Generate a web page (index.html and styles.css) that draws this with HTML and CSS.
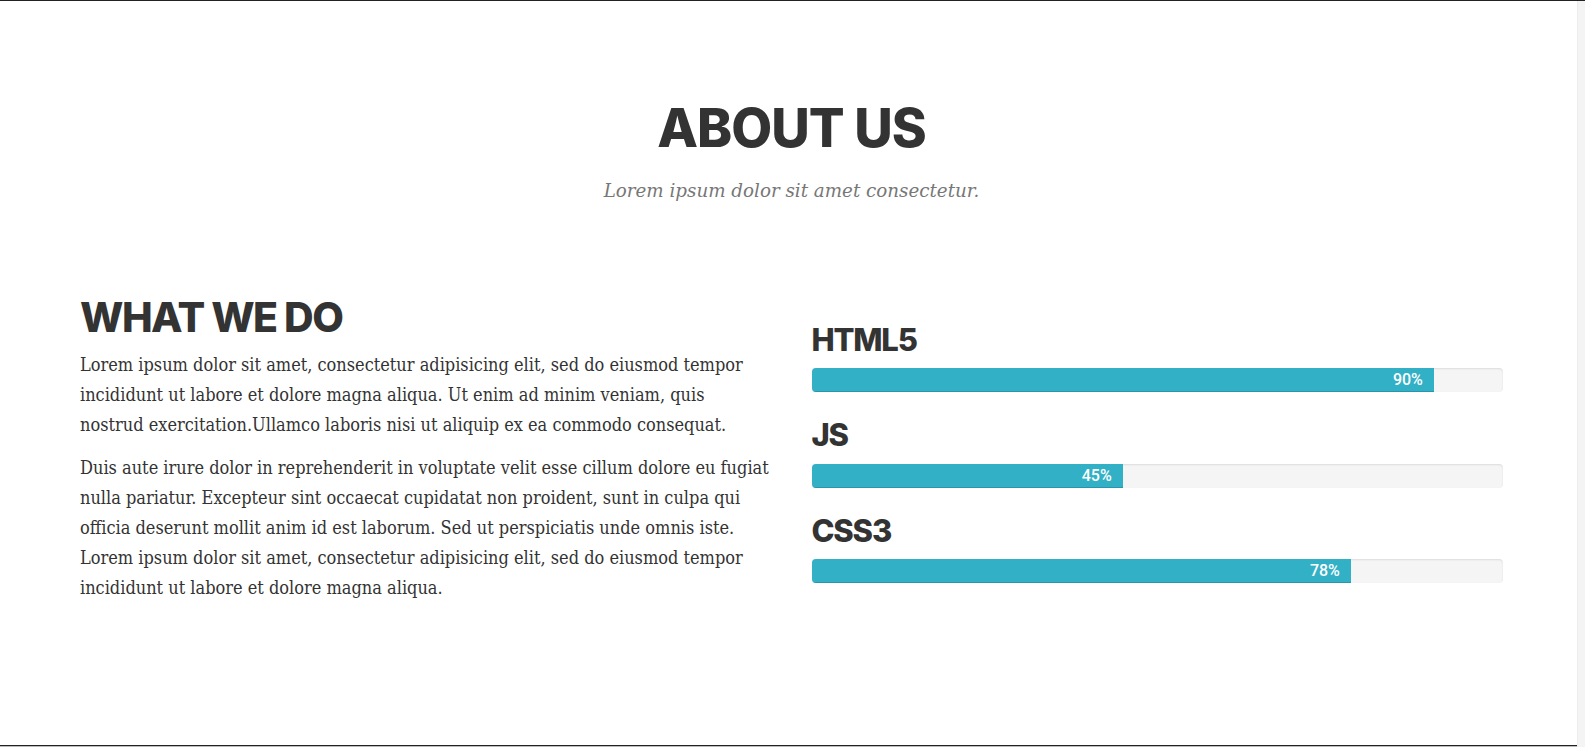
FILE: index.html
```html
<!DOCTYPE html>
<html lang="en">
<head>
<meta charset="utf-8">
<title>About Us</title>
<link rel="stylesheet" href="styles.css">
</head>
<body>
<section class="about">
  <div class="container">
    <header class="section-head">
      <h2 class="section-heading">ABOUT US</h2>
      <h3 class="section-subheading">Lorem ipsum dolor sit amet consectetur.</h3>
    </header>
    <div class="row">
      <div class="col-text">
        <h3 class="col-title">WHAT WE DO</h3>
        <p>Lorem ipsum dolor sit amet, consectetur adipisicing elit, sed do eiusmod tempor incididunt ut labore et dolore magna aliqua. Ut enim ad minim veniam, quis nostrud exercitation.Ullamco laboris nisi ut aliquip ex ea commodo consequat.</p>
        <p>Duis aute irure dolor in reprehenderit in voluptate velit esse cillum dolore eu fugiat nulla pariatur. Excepteur sint occaecat cupidatat non proident, sunt in culpa qui officia deserunt mollit anim id est laborum. Sed ut perspiciatis unde omnis iste. Lorem ipsum dolor sit amet, consectetur adipisicing elit, sed do eiusmod tempor incididunt ut labore et dolore magna aliqua.</p>
      </div>
      <div class="col-skills">
        <div class="skill">
          <h4 class="skill-name">HTML5</h4>
          <div class="progress"><div class="progress-bar" style="width: 90%">90%</div></div>
        </div>
        <div class="skill">
          <h4 class="skill-name">JS</h4>
          <div class="progress"><div class="progress-bar" style="width: 45%">45%</div></div>
        </div>
        <div class="skill">
          <h4 class="skill-name">CSS3</h4>
          <div class="progress"><div class="progress-bar" style="width: 78%">78%</div></div>
        </div>
      </div>
    </div>
  </div>
</section>
<div class="next-section"></div>
<div class="scroll-strip"></div>
</body>
</html>
```

FILE: styles.css
```css
* { box-sizing: border-box; }

html, body {
  margin: 0;
  padding: 0;
  background: #fff;
}

body {
  border-top: 1px solid #222;
  font-family: "DejaVu Serif", serif;
  color: #333;
  overflow: hidden;
}

.about {
  height: 744px;
  padding-top: 101px;
}

.container {
  padding: 0 82px 0 80px;
}

.section-head {
  text-align: center;
}

.section-heading {
  margin: 0;
  font-family: Inter, "Liberation Sans", sans-serif;
  font-weight: 800;
  font-size: 53px;
  line-height: 53px;
  color: #333;
  letter-spacing: -1px;
}

.section-subheading {
  margin: 26px 0 0;
  font-family: "DejaVu Serif", serif;
  font-style: italic;
  font-weight: 400;
  font-size: 18.3px;
  line-height: 19px;
  color: #777;
}

.row {
  display: grid;
  grid-template-columns: 1fr 1fr;
  column-gap: 40px;
  margin-top: 96px;
}

.col-title {
  margin: 0 0 12px;
  font-family: Inter, "Liberation Sans", sans-serif;
  font-weight: 800;
  font-size: 41px;
  line-height: 42px;
  color: #333;
  letter-spacing: -1.5px;
}

.col-text p {
  margin: 0 0 14px;
  font-family: "DejaVu Serif", serif;
  font-stretch: condensed;
  font-size: 18px;
  line-height: 29.8px;
  color: #333;
}

.col-skills {
  padding-top: 26.5px;
}

.skill-name {
  margin: 0 0 12.5px;
  font-family: Inter, "Liberation Sans", sans-serif;
  font-weight: 800;
  font-size: 31px;
  line-height: 33px;
  color: #333;
  letter-spacing: -1.2px;
}

.progress {
  height: 24px;
  margin-bottom: 26px;
  background: #f5f5f5;
  border-radius: 4px;
  box-shadow: inset 0 1px 2px rgba(0, 0, 0, 0.1);
  overflow: hidden;
}

.progress-bar {
  height: 100%;
  background: #32b0c6;
  box-shadow: inset 0 -1px 0 rgba(0, 0, 0, 0.15);
  text-align: right;
  padding-right: 11px;
  color: #fff;
  font-family: Roboto, "Liberation Sans", sans-serif;
  font-weight: 500;
  font-size: 16px;
  line-height: 24px;
}

.next-section {
  height: 3px;
  border-top: 1px solid #222;
  background: #bbb;
}

.scroll-strip {
  position: fixed;
  top: 1px;
  right: 0;
  width: 8px;
  bottom: 0;
  background: #f4f4f4;
  border-left: 1px solid #ececec;
}
```
